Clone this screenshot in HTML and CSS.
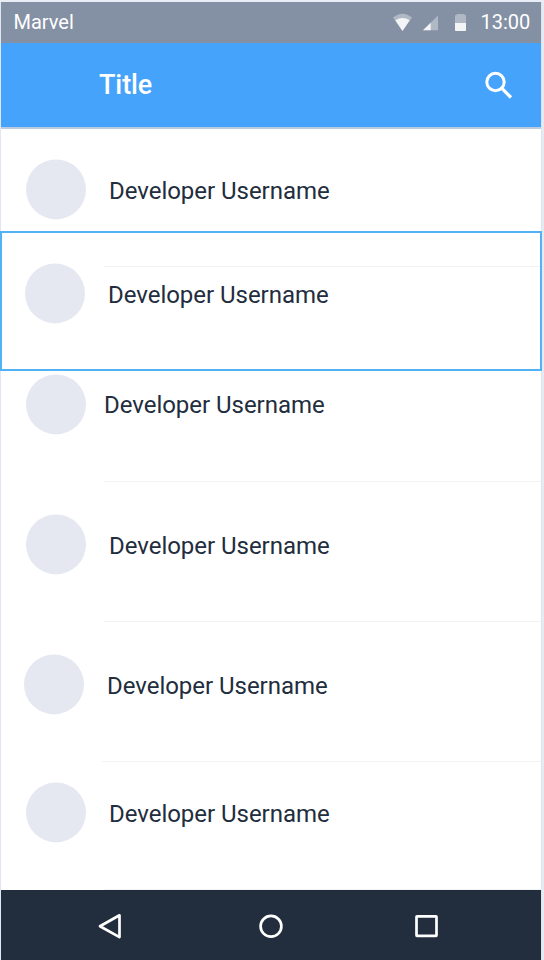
FILE: index.html
```html
<!DOCTYPE html>
<html lang="en">
<head>
<meta charset="utf-8">
<title>Title</title>
<link rel="stylesheet" href="styles.css">
</head>
<body>
<div class="screen">
  <div class="status">
    <span class="carrier">Marvel</span>
    <svg class="signals" width="76" height="20" viewBox="0 0 76 20">
      <path d="M0 4.5Q9.500-3.100 19 4.500L9.500 18z" fill="#b0b8c5"/>
      <path d="M2.300 7.200Q9.500 2.600 16.700 7.200L9.500 18z" fill="#f3f4f6"/>
      <path d="M30 17.300L45 2.500V17.300z" fill="#b0b8c5"/>
      <path d="M30 17.300L37.700 9.700V17.300z" fill="#f3f4f6"/>
      <path d="M62 10V2.500L64.500 1H70.500L73 2.500V10z" fill="#b0b8c5"/>
      <path d="M62 10H73V17.500L72.500 18H62.500L62 17.500z" fill="#f3f4f6"/>
    </svg>
    <span class="clock">13:00</span>
  </div>
  <header class="header">
    <h1 class="title">Title</h1>
    <svg class="search" width="30" height="30" viewBox="0 0 30 30" fill="none" stroke="#fff">
      <circle cx="11.500" cy="12" r="8.700" stroke-width="3"/>
      <path d="M17.700 18.200L27 27.500" stroke-width="3.300"/>
    </svg>
  </header>
  <main class="list">
    <div class="row first"><i class="avatar"></i><span class="name">Developer Username</span></div>
    <div class="row selected"><i class="avatar"></i><span class="name">Developer Username</span></div>
    <div class="row third"><i class="avatar"></i><span class="name">Developer Username</span></div>
    <div class="row"><i class="avatar"></i><span class="name">Developer Username</span></div>
    <div class="row fifth"><i class="avatar"></i><span class="name">Developer Username</span></div>
    <div class="row last"><i class="avatar"></i><span class="name">Developer Username</span></div>
  </main>
  <nav class="nav">
    <svg width="26" height="28" viewBox="0 0 26 28"><path d="M3 14.200L22.500 3.300V25.100z"/></svg>
    <svg class="home" width="26" height="28" viewBox="0 0 26 28"><circle cx="13" cy="14.300" r="10.400"/></svg>
    <svg width="26" height="28" viewBox="0 0 26 28"><rect x="3.500" y="4.300" width="20" height="19.500" rx="0.500"/></svg>
  </nav>
</div>
</body>
</html>
```
FILE: styles.css
```css
* { box-sizing: border-box; }
body {
  margin: 0;
  height: 960px;
  padding: 2px 3px 0 1px;
  overflow: hidden;
  background: linear-gradient(90deg, #e2e6f0 0 541px, #e0e4ed 541px 542px, #e6eaf2 542px);
  font-family: Roboto, sans-serif;
  color: #222d3d;
}
body::before {
  content: "";
  position: absolute;
  inset: 0 0 auto;
  height: 2px;
  background: #e9eef6;
}
.screen { display: flex; flex-direction: column; width: 540px; height: 958px; background: #fff; }
.status {
  display: flex;
  align-items: center;
  height: 41px;
  padding: 0 10.500px 1px 12.500px;
  background: #8490a4;
  color: #fff;
  font-size: 20px;
}
.carrier { flex: 1; }
.signals { margin: 1px 11.500px 0 0; }
.clock { width: 50px; white-space: nowrap; }
.header {
  display: flex;
  align-items: center;
  justify-content: space-between;
  height: 86px;
  padding: 0 27px 0 98px;
  background: #45a3fb;
  border-bottom: 2px solid #bdcbdf;
  color: #fff;
}
.title { margin: 0; font-size: 27px; font-weight: 500; line-height: 32px; letter-spacing: -0.100px; }
.list { flex: 1; display: flex; flex-direction: column; }
.row {
  position: relative;
  display: flex;
  gap: 23px;
  height: 140px;
  padding: 32px 0 0 25px;
}
.row::after {
  content: "";
  position: absolute;
  left: 103px;
  right: 0;
  bottom: 0;
  height: 1px;
  background: #f1f2f4;
}
.avatar {
  width: 60px;
  height: 60px;
  border-radius: 50%;
  background: #e5e8f1;
  transform: translateY(0.400px);
}
.name { font-size: 24px; line-height: 28px; padding-top: 18px; white-space: nowrap; letter-spacing: -0.030px; }
.first { height: 102px; padding-top: 30px; }
.first::after { display: none; }
.selected {
  width: 542px;
  margin-left: -1px;
  padding: 30px 0 0 23px;
  border: 2px solid #53b1f6;
}
.selected::after { left: 102px; top: 33px; }
.third { height: 111px; padding-top: 3px; gap: 18px; }
.third .name { padding-top: 17px; }
.fifth { padding-left: 23px; }
.fifth::after { left: 101px; }
.last { height: 128px; padding-top: 20px; }
.nav {
  display: flex;
  justify-content: space-between;
  height: 70px;
  padding: 22px 102px 0 95.500px;
  background: #222d3d;
}
.nav svg { fill: none; stroke: #fff; stroke-width: 2.700; stroke-linejoin: round; }
.nav .home { margin-left: 7px; }
```
